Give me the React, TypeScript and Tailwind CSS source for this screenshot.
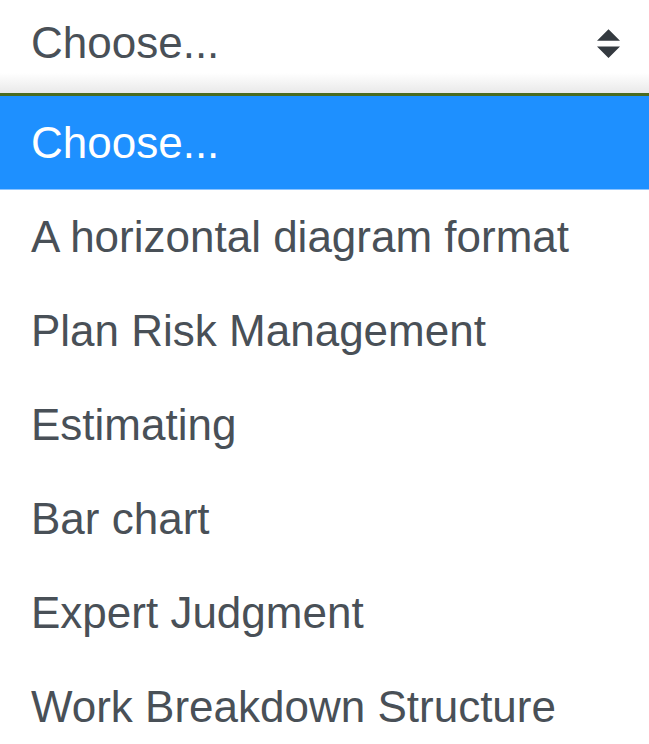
import React from "react";

const options = [
  "A horizontal diagram format",
  "Plan Risk Management",
  "Estimating",
  "Bar chart",
  "Expert Judgment",
  "Work Breakdown Structure",
];

export default function App() {
  return (
    <div
      className="w-[649px] h-[744px] overflow-hidden bg-white text-[#495057]"
      style={{ fontFamily: '"Liberation Sans", Arial, sans-serif' }}
    >
      <div className="relative h-[93px] bg-white">
        <div className="absolute left-0 right-0 bottom-0 h-[20px] bg-gradient-to-b from-white to-[#e9e9e9]" />
        <div className="relative flex h-[86px] items-center justify-between pl-[31px] pr-[29px]">
          <span className="text-[44px] leading-none">Choose...</span>
          <svg width="23" height="29" viewBox="0 0 4 5" className="mt-[1px]">
            <path d="M2 0L0 2h4zm0 5L0 3h4z" fill="#343a40" />
          </svg>
        </div>
      </div>
      <div className="h-[3px] bg-[#4a6b1f]" />
      <div className="flex h-[94px] items-center bg-[#1e90ff] pl-[31px] text-white border-b border-[#8cc4ff]">
        <span className="text-[44px] leading-none">Choose...</span>
      </div>
      {options.map((o) => (
        <div key={o} className="flex h-[94px] items-center pl-[31px]">
          <span className="text-[44px] leading-none">{o}</span>
        </div>
      ))}
    </div>
  );
}
